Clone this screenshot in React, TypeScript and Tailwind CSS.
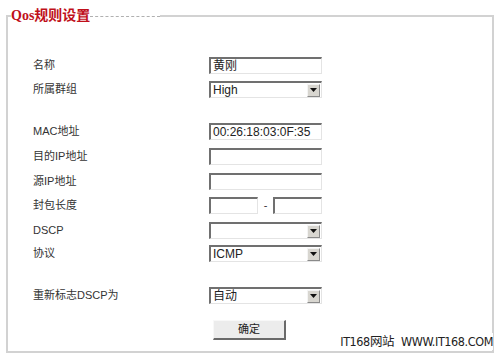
import React from "react";

const font = { fontFamily: '"Liberation Sans", Arial, "Noto Sans CJK SC", sans-serif' };

function TextBox({ value = "", width = "w-[113px]" }: { value?: string; width?: string }) {
  return (
    <div
      className={`${width} h-[17px] border border-t-2 border-l-2 border-t-[#707070] border-l-[#707070] border-r-[#e4e4e4] border-b-[#e4e4e4] bg-white flex items-center px-[2px] text-[12px] leading-none text-[#222]`}
    >
      {value}
    </div>
  );
}

function SelectBox({ value = "" }: { value?: string }) {
  return (
    <div className="w-[113px] h-[17px] border border-t-2 border-l-2 border-t-[#707070] border-l-[#707070] border-r-[#e4e4e4] border-b-[#e4e4e4] bg-white flex items-center justify-between pl-[2px] pr-[1px] text-[12px] leading-none text-[#222]">
      <span>{value}</span>
      <span className="w-[13px] h-[13px] bg-[#d8d6d0] border border-t-[#f4f4f4] border-l-[#f4f4f4] border-r-[#8a8a8a] border-b-[#8a8a8a] flex items-center justify-center">
        <svg width="7" height="4" viewBox="0 0 7 4">
          <path d="M0 0H7L3.5 4Z" fill="#111" />
        </svg>
      </span>
    </div>
  );
}

function Row({ label, mt, children }: { label: string; mt: string; children: React.ReactNode }) {
  return (
    <div className={`flex items-center h-[17px] ${mt}`}>
      <div className="w-[201px] pl-[25px] text-[11px] text-[#333]">{label}</div>
      {children}
    </div>
  );
}

export default function App() {
  return (
    <div className="w-[500px] h-[359px] bg-white relative overflow-hidden" style={font}>
      <fieldset className="ml-[6px] mt-[8px] w-[488px] h-[345px] border-2 border-[#d2d2d2] pt-0">
        <legend className="ml-[3px] flex items-center">
          <span
            className="text-[14px] font-bold text-[#c0101a] leading-[16px]"
            style={{ fontFamily: '"Liberation Serif", "Noto Sans CJK SC", serif' }}
          >
            Qos规则设置
          </span>
          <span className="w-[70px] border-t border-dashed border-[#b0b0b0]" />
        </legend>

        <div className="pt-[33px]">
          <Row label="名称" mt="mt-0">
            <TextBox value="黄刚" />
          </Row>
          <Row label="所属群组" mt="mt-[7px]">
            <SelectBox value="High" />
          </Row>
          <Row label="MAC地址" mt="mt-[25px]">
            <TextBox value="00:26:18:03:0F:35" />
          </Row>
          <Row label="目的IP地址" mt="mt-[8px]">
            <TextBox />
          </Row>
          <Row label="源IP地址" mt="mt-[8px]">
            <TextBox />
          </Row>
          <Row label="封包长度" mt="mt-[7px]">
            <div className="flex items-center">
              <TextBox width="w-[49px]" />
              <span className="w-[15px] text-center text-[11px] text-[#333]">-</span>
              <TextBox width="w-[49px]" />
            </div>
          </Row>
          <Row label="DSCP" mt="mt-[8px]">
            <SelectBox />
          </Row>
          <Row label="协议" mt="mt-[6px]">
            <SelectBox value="ICMP" />
          </Row>
          <Row label="重新标志DSCP为" mt="mt-[25px]">
            <SelectBox value="自动" />
          </Row>
          <div className="flex mt-[16px] pl-[205px]">
            <button className="w-[73px] h-[20px] bg-[#ececec] border border-t-[#f8f8f8] border-l-[#f8f8f8] border-r-2 border-b-2 border-r-[#6a6a6a] border-b-[#6a6a6a] text-[11px] text-[#222] leading-none">
              确定
            </button>
          </div>
        </div>
      </fieldset>

      <div
        className="absolute right-[7px] top-[333px] bg-white text-[12.5px] leading-[17px] text-[#222] tracking-[-0.4px] flex gap-[7px]"
        style={{ fontFamily: '"DejaVu Sans Condensed", "Noto Sans CJK SC", sans-serif' }}
      >
        <span>IT168网站</span>
        <span>WWW.IT168.COM</span>
      </div>
    </div>
  );
}
